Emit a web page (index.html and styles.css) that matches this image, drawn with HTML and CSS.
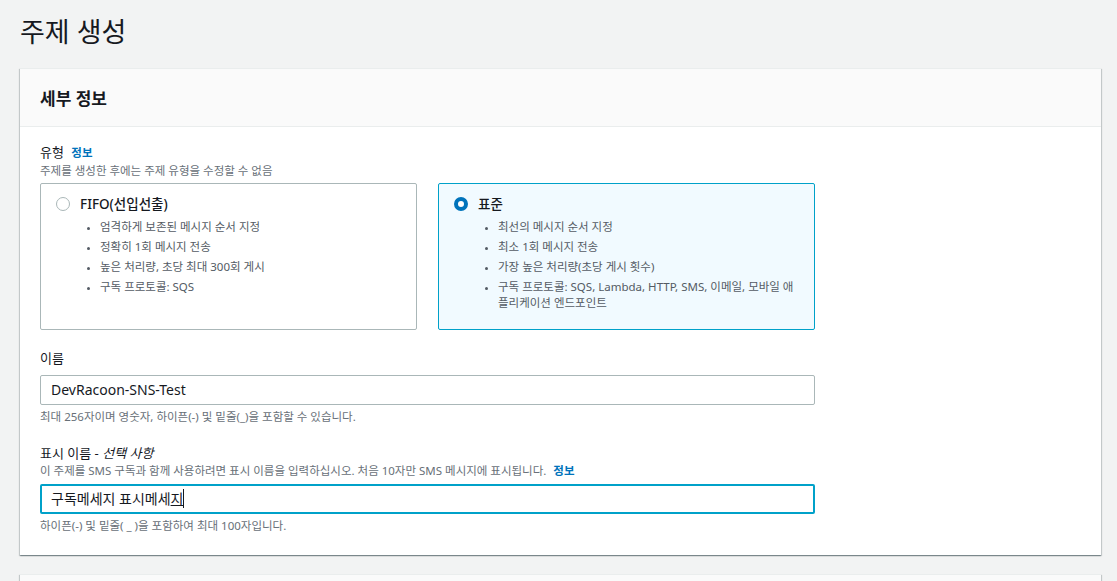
FILE: index.html
```html
<!DOCTYPE html>
<html lang="ko">
<head>
    <meta charset="utf-8">
    <link rel="stylesheet" href="styles.css">
</head>
<body>
    <div class="page">
        <h1 class="page-title">주제 생성</h1>

        <div class="panel">
            <div class="panel-header">
                <h2>세부 정보</h2>
            </div>
            <div class="panel-body">
                <div class="field">
                    <div class="field-label">유형 <a class="info-link">정보</a></div>
                    <div class="field-desc">주제를 생성한 후에는 주제 유형을 수정할 수 없음</div>

                    <div class="tiles">
                        <div class="tile">
                            <div class="tile-title">
                                <span class="radio"></span>
                                FIFO(선입선출)
                            </div>
                            <ul class="tile-list">
                                <li>엄격하게 보존된 메시지 순서 지정</li>
                                <li>정확히 1회 메시지 전송</li>
                                <li>높은 처리량, 초당 최대 300회 게시</li>
                                <li>구독 프로토콜: SQS</li>
                            </ul>
                        </div>
                        <div class="tile tile-selected">
                            <div class="tile-title">
                                <span class="radio radio-checked"></span>
                                표준
                            </div>
                            <ul class="tile-list">
                                <li>최선의 메시지 순서 지정</li>
                                <li>최소 1회 메시지 전송</li>
                                <li>가장 높은 처리량(초당 게시 횟수)</li>
                                <li>구독 프로토콜: SQS, Lambda, HTTP, SMS, 이메일, 모바일 애<br>플리케이션 엔드포인트</li>
                            </ul>
                        </div>
                    </div>
                </div>

                <div class="field">
                    <div class="field-label">이름</div>
                    <div class="text-input">DevRacoon-SNS-Test</div>
                    <div class="field-hint">최대 256자이며 영숫자, 하이픈(-) 및 밑줄(_)을 포함할 수 있습니다.</div>
                </div>

                <div class="field">
                    <div class="field-label">표시 이름 - <i>선택 사항</i></div>
                    <div class="field-desc">이 주제를 SMS 구독과 함께 사용하려면 표시 이름을 입력하십시오. 처음 10자만 SMS 메시지에 표시됩니다. <a class="info-link">정보</a></div>
                    <div class="text-input text-input-focus">구독메세지 표시메세<span class="composing">지</span></div>
                    <div class="field-hint">하이픈(-) 및 밑줄( _ )을 포함하여 최대 100자입니다.</div>
                </div>
            </div>
        </div>

        <div class="panel panel-next">
            <div class="panel-header"></div>
        </div>
    </div>
</body>
</html>
```

FILE: styles.css
```css
body {
    margin: 0;
    background-color: #f2f3f3;
    font-family: "Noto Sans", "Noto Sans CJK KR", sans-serif;
    color: #16191f;
}

.page {
    padding: 0 16px 0 20px;
}

.page-title {
    margin: 0;
    padding-top: 14px;
    height: 68px;
    box-sizing: border-box;
    font-size: 27px;
    font-weight: 400;
    line-height: 36px;
}

.panel {
    background-color: #fff;
    border-top: 1px solid #eaeded;
    box-shadow: 0 1px 1px 0 rgba(0, 28, 36, 0.3), 1px 1px 1px 0 rgba(0, 28, 36, 0.15), -1px 1px 1px 0 rgba(0, 28, 36, 0.15);
}

.panel-header {
    height: 57px;
    padding: 0 20px;
    display: flex;
    align-items: center;
    background-color: #fafafa;
    border-bottom: 1px solid #eaeded;
}

.panel-header h2 {
    margin: 0;
    font-size: 17px;
    font-weight: 700;
}

.panel-body {
    padding: 15px 20px 21px 20px;
}

.field {
    max-width: 775px;
}

.field + .field {
    margin-top: 18px;
}

.field-label {
    font-size: 13px;
    line-height: 20px;
}

.field-label i {
    font-style: italic;
}

.info-link {
    margin-left: 4px;
    color: #0073bb;
    font-size: 11.5px;
    font-weight: 700;
}

.field-desc {
    font-size: 11.5px;
    line-height: 16px;
    color: #687078;
}

.field-hint {
    margin-top: 4px;
    font-size: 11.5px;
    line-height: 16px;
    color: #687078;
}

.tiles {
    margin-top: 4px;
    display: grid;
    grid-template-columns: 377px 377px;
    gap: 21px;
}

.tile {
    border: 1px solid #aab7b8;
    border-radius: 2px;
    padding: 10px 15px 14px 15px;
}

.tile-selected {
    background-color: #f1faff;
    border-color: #00a1c9;
}

.tile-title {
    display: flex;
    align-items: center;
    gap: 10px;
    font-size: 13.5px;
    font-weight: 500;
    line-height: 20px;
}

.radio {
    width: 14px;
    height: 14px;
    box-sizing: border-box;
    border: 1.5px solid #aab7b8;
    border-radius: 50%;
    background-color: #fff;
}

.radio-checked {
    border: 4px solid #0073bb;
}

.tile-list {
    margin: 5px 0 0 0;
    padding-left: 44px;
    font-size: 11.5px;
    line-height: 16px;
    color: #545b64;
}

.tile-list li {
    margin-bottom: 4px;
}

.tile-list li::marker {
    font-size: 9px;
}

.text-input {
    height: 30px;
    box-sizing: border-box;
    padding: 0 10px;
    border: 1px solid #aab7b8;
    border-radius: 2px;
    background-color: #fff;
    font-size: 14px;
    line-height: 28px;
}

.field-label + .text-input {
    margin-top: 7px;
}

.field-desc + .text-input {
    margin-top: 5px;
}

.text-input-focus {
    border: 2px solid #00a1c9;
    padding-left: 9px;
    line-height: 26px;
}

.composing {
    text-decoration: underline;
    border-right: 1px solid #16191f;
}

.panel-next {
    margin-top: 19px;
    height: 40px;
}
```
